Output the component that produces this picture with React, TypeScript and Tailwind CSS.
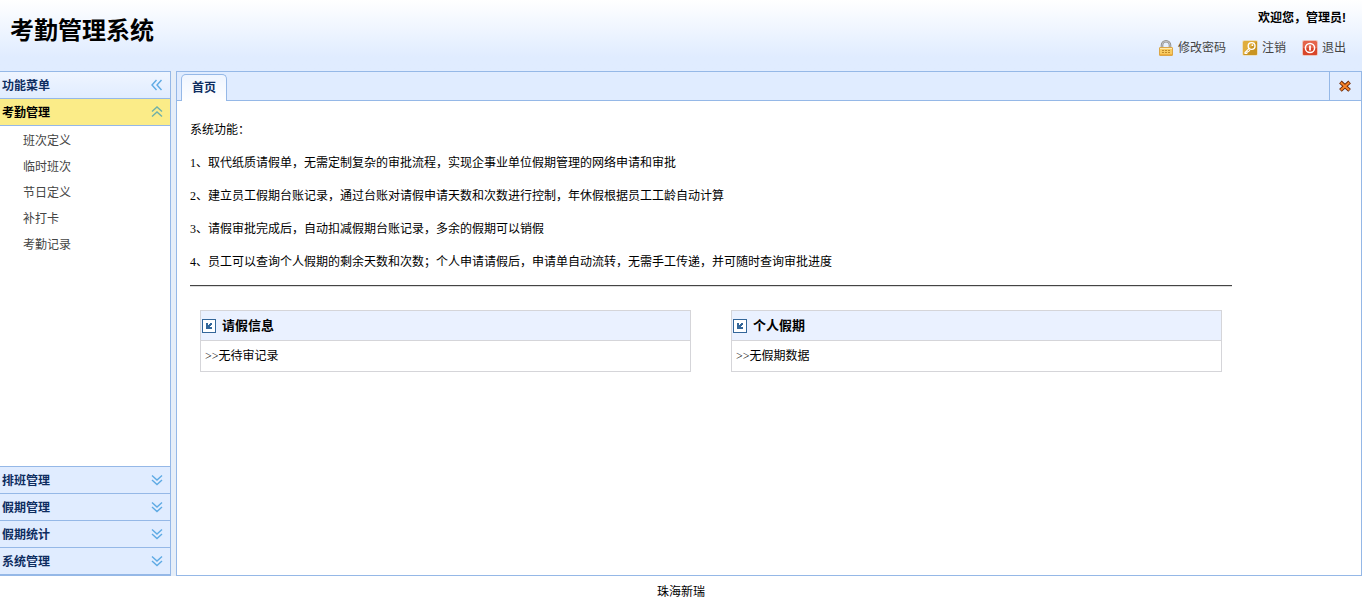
import React, { useState } from 'react';

interface MenuGroup {
  title: string;
  items: string[];
}

interface PanelProps {
  title: string;
  text: string;
}

const groups: MenuGroup[] = [
  { title: '考勤管理', items: ['班次定义', '临时班次', '节日定义', '补打卡', '考勤记录'] },
  { title: '排班管理', items: [] },
  { title: '假期管理', items: [] },
  { title: '假期统计', items: [] },
  { title: '系统管理', items: [] },
];

const features = [
  '1、取代纸质请假单，无需定制复杂的审批流程，实现企事业单位假期管理的网络申请和审批',
  '2、建立员工假期台账记录，通过台账对请假申请天数和次数进行控制，年休假根据员工工龄自动计算',
  '3、请假审批完成后，自动扣减假期台账记录，多余的假期可以销假',
  '4、员工可以查询个人假期的剩余天数和次数；个人申请请假后，申请单自动流转，无需手工传递，并可随时查询审批进度',
];

const LockIcon = () => (
  <svg className="h-4 w-4" viewBox="0 0 16 16" fill="none">
    <path d="M4 7.5V5.2a4 3.9 0 0 1 8 0v2.3" stroke="#8f8f8f" strokeWidth="2.6" />
    <path d="M4 7.5V5.2a4 3.9 0 0 1 8 0v2.3" stroke="#c4c4c4" strokeWidth="1" />
    <rect x="1.5" y="7.5" width="13" height="8" rx="0.5" fill="#f8cb62" stroke="#dba648" />
    <path d="M2 8.5h12" stroke="#fdeab0" />
    <path d="M4 10.5h2M7 10.5h2M10 10.5h2M4 12.5h2M7 12.5h2M10 12.5h2" stroke="#c08a2b" />
    <path d="M2 14.5h12" stroke="#efae40" />
  </svg>
);

const KeyIcon = () => (
  <svg className="h-4 w-4" viewBox="0 0 16 16" fill="none">
    <rect x="0.5" y="0.5" width="15" height="15" rx="1" fill="#fff" stroke="#eadfc4" />
    <rect x="1" y="1" width="14" height="14" rx="1" fill="#e0ad3c" />
    <path d="M1 15L15 1v13a1 1 0 0 1-1 1z" fill="#c99422" />
    <circle cx="9.6" cy="6" r="3.4" stroke="#fff" strokeWidth="1.4" />
    <circle cx="10.4" cy="5.2" r="0.9" fill="#fff" />
    <path d="M7.2 8.4L3 12.6v.8h1.8l.4-1.4 1.4-.4 1.4-1.6" stroke="#fff" strokeWidth="1.1" />
  </svg>
);

const PowerIcon = () => (
  <svg className="h-4 w-4" viewBox="0 0 16 16" fill="none">
    <rect x="0.5" y="0.5" width="15" height="15" rx="1" fill="#fff" stroke="#ecc3bb" />
    <rect x="1" y="1" width="14" height="14" rx="1" fill="#e4654b" />
    <path d="M1 8h14v6a1 1 0 0 1-1 1H2a1 1 0 0 1-1-1z" fill="#d8452a" />
    <circle cx="8" cy="8" r="4.6" stroke="#fff" strokeWidth="1.5" />
    <path d="M8 5.5v5" stroke="#fff" strokeWidth="1.8" />
  </svg>
);

const CloseIcon = () => (
  <svg className="h-4 w-4" viewBox="0 0 16 16" fill="none">
    <path d="M3.4 4l9.2 8.4M12.6 4l-9.2 8.4" stroke="#6d2a08" strokeWidth="3.8" />
    <path d="M3.8 4.4l8.4 7.6M12.2 4.4l-8.4 7.6" stroke="#f5822a" strokeWidth="2" />
  </svg>
);

const ArrowBoxIcon = () => (
  <svg className="h-3.5 w-3.5" viewBox="0 0 14 14" fill="none" shapeRendering="crispEdges">
    <rect x="0.5" y="0.5" width="13" height="13" fill="#fff" stroke="#336699" />
    <path d="M4 4h2v2h1V5h1V4h2v2H9v1H8v1h2v2H4z" fill="#336699" />
  </svg>
);

const chevrons = {
  left: 'M7.5 3L3 8l4.5 5M12.5 3L8 8l4.5 5',
  up: 'M3 7.5L8 3l5 4.5M3 12.5L8 8l5 4.5',
  down: 'M3 3.5L8 8l5-4.5M3 8L8 12.5 13 8',
};

const Chevrons = ({ direction, color }: { direction: keyof typeof chevrons; color: string }) => (
  <svg className="h-4 w-4" viewBox="0 0 16 16" fill="none" stroke={color} strokeWidth="1.4">
    <path d={chevrons[direction]} />
  </svg>
);

const Panel: React.FC<PanelProps> = ({ title, text }) => (
  <section className="flex-1 border border-[#d5d5d9]">
    <h2 className="flex h-[30px] items-center gap-1.5 border-b border-[#d5d5d9] bg-[#eaf1ff] pl-px text-[13px] font-bold">
      <ArrowBoxIcon />
      {title}
    </h2>
    <p className="px-1 leading-[30px]">&gt;&gt;{text}</p>
  </section>
);

const Header = () => (
  <header className="flex h-[71px] shrink-0 justify-between bg-linear-to-b from-white to-[#e0ecff] to-80% pr-4 pl-2.5">
    <h1 className="text-2xl leading-[62px] font-bold">考勤管理系统</h1>
    <div className="flex flex-col items-end gap-2.5 pt-2 leading-5">
      <p className="font-bold">欢迎您，管理员!</p>
      <nav className="flex gap-4 text-[#444]">
        <a href="#password" className="flex items-center gap-1"><LockIcon />修改密码</a>
        <a href="#logout" className="flex items-center gap-1"><KeyIcon />注销</a>
        <a href="#exit" className="flex items-center gap-1"><PowerIcon />退出</a>
      </nav>
    </div>
  </header>
);

const Sidebar = () => {
  const [active, setActive] = useState('考勤管理');

  return (
    <aside className="flex w-[171px] shrink-0 flex-col border-y border-r border-[#95b8e7] bg-white">
      <div className="flex h-[27px] shrink-0 items-center justify-between border-b border-[#95b8e7] bg-linear-to-b from-[#eff5ff] to-[#e0ecff] pr-[5px] pl-0.5 font-bold text-[#0e2d5f]">
        <span className="pt-0.5">功能菜单</span>
        <button type="button" aria-label="收起菜单">
          <Chevrons direction="left" color="#5eaae4" />
        </button>
      </div>
      {groups.map((group) => {
        const open = group.title === active;
        return (
          <div key={group.title} className={open ? 'flex-1' : ''}>
            <button
              type="button"
              aria-expanded={open}
              onClick={() => setActive(group.title)}
              className={`flex w-full items-center justify-between border-b border-[#95b8e7] pr-[5px] pl-0.5 font-bold ${
                open ? 'h-[27px] bg-[#fbec88] text-black' : '-mt-px h-[28px] border-t bg-[#e0ecff] text-[#0e2d5f]'
              }`}
            >
              <span className="pt-0.5">{group.title}</span>
              <Chevrons direction={open ? 'up' : 'down'} color={open ? '#6fb0a8' : '#5eaae4'} />
            </button>
            {open && (
              <ul className="pt-0.5 pl-[23px] leading-[26px] text-[#444]">
                {group.items.map((item) => (
                  <li key={item}>
                    <a href={`#${item}`}>{item}</a>
                  </li>
                ))}
              </ul>
            )}
          </div>
        );
      })}
    </aside>
  );
};

const App: React.FC = () => {
  return (
    <div className="flex h-screen flex-col bg-white font-['Liberation_Sans','Noto_Sans_CJK_SC',sans-serif] text-xs text-black">
      <Header />
      <div className="flex min-h-0 flex-1 gap-[5px] bg-[#e6eef8]">
        <Sidebar />
        <main className="flex min-w-0 flex-1 flex-col border border-[#95b8e7] bg-white">
          <div className="flex h-[29px] shrink-0 justify-between border-b border-[#95b8e7] bg-[#e0ecff]">
            <div role="tablist" className="flex pt-0.5 pl-1">
              <button
                type="button"
                role="tab"
                aria-selected="true"
                className="-mb-px rounded-t-[5px] border border-b-0 border-[#95b8e7] bg-linear-to-b from-[#eff5ff] to-white px-2.5 font-bold text-[#0e2d5f]"
              >
                首页
              </button>
            </div>
            <button type="button" aria-label="关闭" className="flex w-8 items-center border-l border-[#95b8e7] pl-[7px]">
              <CloseIcon />
            </button>
          </div>
          <div className="min-h-0 flex-1 overflow-auto font-['Liberation_Serif','Noto_Sans_CJK_SC',serif]">
            <div className="ml-[13px] w-[88%] pt-[13px]">
              <div className="leading-[33px]">
                <p>系统功能：</p>
                {features.map((feature) => (
                  <p key={feature}>{feature}</p>
                ))}
              </div>
              <hr className="mt-1.5 border-t border-b border-t-[#444] border-b-[#ddd]" />
              <div className="flex gap-10 px-2.5 pt-[23px]">
                <Panel title="请假信息" text="无待审记录" />
                <Panel title="个人假期" text="无假期数据" />
              </div>
            </div>
          </div>
        </main>
      </div>
      <footer className="shrink-0 pt-0.5 text-center leading-7">珠海新瑞</footer>
    </div>
  );
};

export default App;
